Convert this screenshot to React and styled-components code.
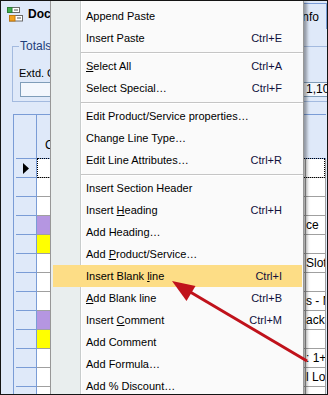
import React from 'react'
import styled, { createGlobalStyle } from 'styled-components'

const Global = createGlobalStyle`
  html, body {
    margin: 0;
    padding: 0;
    background: #fff;
  }
  body {
    font-family: "Liberation Sans", Arial, sans-serif;
  }
`

const Frame = styled.div`
  position: relative;
  width: 328px;
  height: 395px;
  box-sizing: border-box;
  border: 1px solid #141414;
  background: #dfe9f9;
  overflow: hidden;
  font-family: "Liberation Sans", Arial, sans-serif;
  color: #000;
`

/* ---------- the editor window behind the menu ---------- */

const Screen = styled.div`
  display: flex;
  flex-direction: column;
`

const TitleBar = styled.div`
  height: 26px;
  display: flex;
  align-items: center;
  gap: 5px;
  padding-left: 6px;
`

const Title = styled.span`
  font-size: 12px;
  font-weight: bold;
  color: #000;
`

const InfoTab = styled.div`
  margin-left: auto;
  align-self: flex-start;
  margin-top: 2px;
  height: 26px;
  box-sizing: border-box;
  padding: 0 7px 0 4px;
  border: 1px solid #7a9cd6;
  border-bottom: none;
  display: flex;
  align-items: center;
  font-size: 12px;
`

const Group = styled.fieldset`
  margin: 12px -60px 0 11px;
  padding: 13px 0 4px 6px;
  border: 1px solid #a3badf;
  display: flex;
  justify-content: space-between;
  align-items: flex-end;
`

const Legend = styled.legend`
  padding: 0 1px;
  font-size: 12px;
  line-height: 14px;
  color: #1f3f7a;
`

const Field = styled.div`
  display: flex;
  flex-direction: ${p => (p.$inline ? 'row' : 'column')};
  align-items: ${p => (p.$inline ? 'center' : 'flex-start')};
  gap: ${p => (p.$inline ? 6 : 2)}px;
`

const FieldLabel = styled.span`
  font-size: 11px;
  line-height: 14px;
`

const FieldBox = styled.div`
  width: ${p => p.$w}px;
  height: 15px;
  box-sizing: border-box;
  margin-left: 1px;
  border: 1px solid #7f9db9;
  background: #f3f7fd;
  padding-left: 2px;
  font-size: 12px;
  line-height: 13px;
  white-space: nowrap;
`

const Grid = styled.div`
  margin: 12px 1px 0 12px;
  border-top: 1px solid #7a9cd6;
  border-left: 1px solid #7a9cd6;
  padding-left: 2px;
`

const GridRow = styled.div`
  position: relative;
  display: grid;
  grid-template-columns: 21px 44px 1fr 20px;
  height: ${p => (p.$head ? 44 : 19)}px;

  ${p =>
    p.$focus &&
    `
    &::after {
      content: '';
      position: absolute;
      left: 21px;
      right: 1px;
      top: -1px;
      bottom: 0;
      border: 1px dotted #000;
    }
  `}
`

const RowHead = styled.div`
  border-right: 1px solid #7a9cd6;
  border-bottom: 1px solid #7a9cd6;
  display: flex;
  align-items: center;
  padding-left: 7px;
`

const HeadCell = styled.div`
  display: flex;
  align-items: flex-end;
  padding: 0 0 6px 8px;
  font-size: 12px;
  line-height: 14px;
  border-bottom: 1px solid #7a9cd6;
`

const toneColors = {
  white: '#fff',
  purple: '#b596e1',
  yellow: '#ffff00',
}

const Cell = styled.div`
  background: ${p => toneColors[p.$tone || 'white']};
  border-right: 1px solid #a0a0a0;
  border-bottom: 1px solid #a0a0a0;
  font-size: 12px;
  line-height: 18px;
  white-space: nowrap;
  overflow: hidden;
`

/* ---------- context menu ---------- */

const Menu = styled.div`
  position: absolute;
  left: 49px;
  top: -1px;
  width: 254px;
  box-sizing: border-box;
  padding-top: 4px;
  border: 1px solid #979797;
  background: linear-gradient(
    to right,
    #e9eeee 0 29px,
    #c8cccc 29px 30px,
    #ffffff 30px 31px,
    #fafafa 31px
  );
  box-shadow: 3px 2px 3px rgba(0, 0, 0, 0.35);
  font-size: 11px;
`

const Item = styled.div`
  height: 22px;
  margin: 0 1px 0 2px;
  padding: 0 20px 0 33px;
  display: flex;
  align-items: center;
  justify-content: space-between;
  background: ${p => (p.$active ? '#fddd86' : 'transparent')};
  white-space: nowrap;

  u {
    text-decoration: underline;
    text-underline-offset: 1px;
  }
`

const Shortcut = styled.span`
  color: #10103c;
`

const Separator = styled.div`
  height: 1px;
  margin: 3px 0 1px 30px;
  background: #c5c5c5;
  border-bottom: 1px solid #fff;
`

const ArrowLayer = styled.svg`
  position: absolute;
  left: -1px;
  top: -1px;
  pointer-events: none;
`

const DocIcon = () => (
  <svg width="16" height="15" viewBox="0 0 16 15">
    <rect x="0.5" y="0.5" width="12" height="5" fill="#fff" stroke="#6a6a6a" />
    <rect x="0.5" y="0.5" width="4.5" height="5" fill="#3fae4d" stroke="#2b7d37" />
    <line x1="7" y1="3" x2="11" y2="3" stroke="#555" />
    <rect x="2.5" y="8.5" width="13" height="5.5" fill="#fff" stroke="#6a6a6a" />
    <rect x="2.5" y="8.5" width="5.5" height="5.5" fill="#f2a21f" stroke="#c47a10" />
    <line x1="10" y1="11" x2="14" y2="11" stroke="#555" />
  </svg>
)

const RowArrow = () => (
  <svg width="6" height="11" viewBox="0 0 6 11">
    <polygon points="0,0 6,5.5 0,11" fill="#000" />
  </svg>
)

const rows = [
  { tone: 'white', desc: '', focus: true },
  { tone: 'white', desc: '' },
  { tone: 'white', desc: '' },
  { tone: 'purple', desc: 'ce' },
  { tone: 'yellow', desc: '' },
  { tone: 'white', desc: 'Slots' },
  { tone: 'white', desc: '' },
  { tone: 'white', desc: 's - Me' },
  { tone: 'purple', desc: 'ack' },
  { tone: 'yellow', desc: '' },
  { tone: 'white', desc: ': 1+' },
  { tone: 'white', desc: 'l Lo' },
  { tone: 'white', desc: '' },
]

const menu = [
  { label: 'Append Paste' },
  { label: 'Insert Paste', key: 'Ctrl+E' },
  'sep',
  { label: 'Select All', u: 0, key: 'Ctrl+A' },
  { label: 'Select Special…', key: 'Ctrl+F' },
  'sep',
  { label: 'Edit Product/Service properties…' },
  { label: 'Change Line Type…' },
  { label: 'Edit Line Attributes…', key: 'Ctrl+R' },
  'sep',
  { label: 'Insert Section Header' },
  { label: 'Insert Heading', u: 7, key: 'Ctrl+H' },
  { label: 'Add Heading…' },
  { label: 'Add Product/Service…', u: 4 },
  { label: 'Insert Blank line', u: 13, key: 'Ctrl+I', active: true },
  { label: 'Add Blank line', u: 0, key: 'Ctrl+B' },
  { label: 'Insert Comment', u: 7, key: 'Ctrl+M' },
  { label: 'Add Comment' },
  { label: 'Add Formula…' },
  { label: 'Add % Discount…' },
]

const Label = ({ text, u }) => {
  if (u === undefined) return <span>{text}</span>
  return (
    <span>
      {text.slice(0, u)}
      <u>{text[u]}</u>
      {text.slice(u + 1)}
    </span>
  )
}

const App = () => {
  return (
    <Frame>
      <Global />
      <Screen>
        <TitleBar>
          <DocIcon />
          <Title>Document Editor</Title>
          <InfoTab>Info</InfoTab>
        </TitleBar>

        <Group>
          <Legend>Totals</Legend>
          <Field>
            <FieldLabel>Extd. Cost</FieldLabel>
            <FieldBox $w={70} />
          </Field>
          <Field $inline>
            <FieldLabel>Total</FieldLabel>
            <FieldBox $w={83}>1,103.50</FieldBox>
          </Field>
        </Group>

        <Grid>
          <GridRow $head>
            <RowHead />
            <HeadCell>Code</HeadCell>
            <HeadCell />
            <HeadCell />
          </GridRow>
          {rows.map((r, i) => (
            <GridRow key={i} $focus={r.focus}>
              <RowHead>{r.focus && <RowArrow />}</RowHead>
              <Cell $tone={r.tone} />
              <Cell />
              <Cell>{r.desc}</Cell>
            </GridRow>
          ))}
        </Grid>
      </Screen>

      <Menu>
        {menu.map((m, i) =>
          m === 'sep' ? (
            <Separator key={i} />
          ) : (
            <Item key={i} $active={m.active}>
              <Label text={m.label} u={m.u} />
              {m.key && <Shortcut>{m.key}</Shortcut>}
            </Item>
          )
        )}
      </Menu>

      <ArrowLayer width="328" height="395" viewBox="0 0 328 395">
        <line x1="307" y1="361" x2="186" y2="289.5" stroke="#c0121b" strokeWidth="3" />
        <polygon points="172,281 195.5,286 186.5,301" fill="#c0121b" />
      </ArrowLayer>
    </Frame>
  )
}

export default App
